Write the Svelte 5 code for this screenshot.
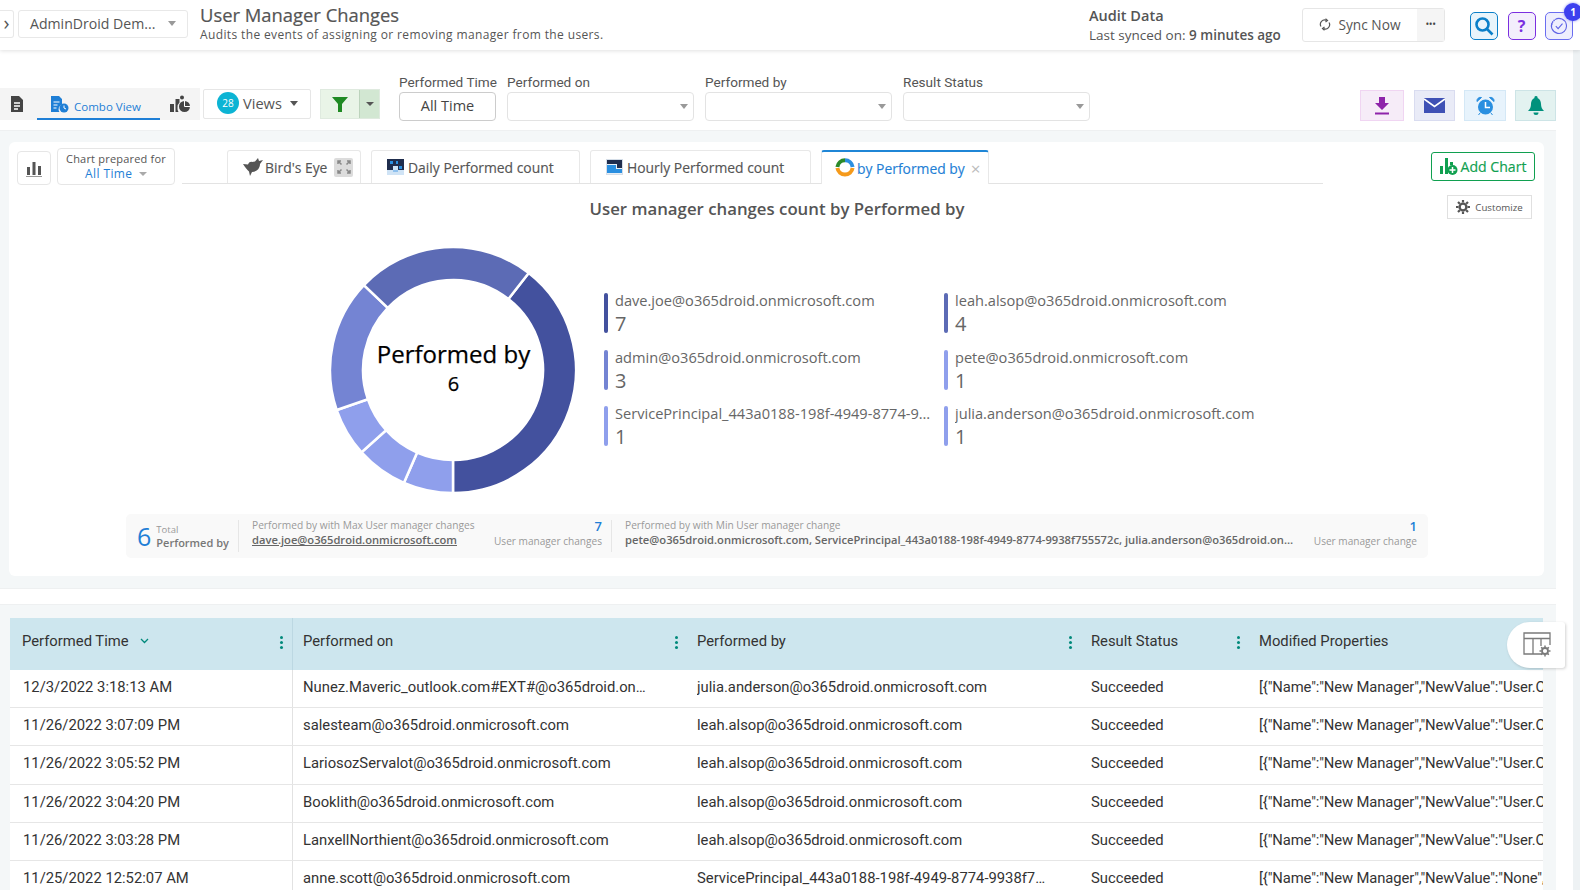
<script>
  const legend = [
    { name: "dave.joe@o365droid.onmicrosoft.com", count: 7, color: "#43519e" },
    { name: "leah.alsop@o365droid.onmicrosoft.com", count: 4, color: "#5c6bb5" },
    { name: "admin@o365droid.onmicrosoft.com", count: 3, color: "#7484d3" },
    { name: "pete@o365droid.onmicrosoft.com", count: 1, color: "#8f9fec" },
    { name: "ServicePrincipal_443a0188-198f-4949-8774-9938f755572c", count: 1, color: "#8f9fec" },
    { name: "julia.anderson@o365droid.onmicrosoft.com", count: 1, color: "#8f9fec" },
  ];

  // start/end angle of each slice, clockwise from 12 o'clock
  const slices = [
    { from: 38, to: 180, color: "#43519e" },
    { from: 180, to: 203.5, color: "#8f9fec" },
    { from: 203.5, to: 228, color: "#8f9fec" },
    { from: 228, to: 251, color: "#8f9fec" },
    { from: 251, to: 313.6, color: "#7484d3" },
    { from: 313.6, to: 398, color: "#5c6bb5" },
  ];

  const pt = (r, a) => {
    const rad = ((a - 90) * Math.PI) / 180;
    return `${(125 + r * Math.cos(rad)).toFixed(2)} ${(125 + r * Math.sin(rad)).toFixed(2)}`;
  };

  const arc = (s) => {
    const big = s.to - s.from > 180 ? 1 : 0;
    return `M${pt(123, s.from)}A123 123 0 ${big} 1 ${pt(123, s.to)}L${pt(90, s.to)}A90 90 0 ${big} 0 ${pt(90, s.from)}Z`;
  };

  const mgr = '[{"Name":"New Manager","NewValue":"User.O365droid.onmicrosoft.com"}]';
  const rows = [
    ["12/3/2022 3:18:13 AM", "Nunez.Maveric_outlook.com#EXT#@o365droid.onmicrosoft.com", "julia.anderson@o365droid.onmicrosoft.com", mgr],
    ["11/26/2022 3:07:09 PM", "salesteam@o365droid.onmicrosoft.com", "leah.alsop@o365droid.onmicrosoft.com", mgr],
    ["11/26/2022 3:05:52 PM", "LariosozServalot@o365droid.onmicrosoft.com", "leah.alsop@o365droid.onmicrosoft.com", mgr],
    ["11/26/2022 3:04:20 PM", "Booklith@o365droid.onmicrosoft.com", "leah.alsop@o365droid.onmicrosoft.com", mgr],
    ["11/26/2022 3:03:28 PM", "LanxellNorthient@o365droid.onmicrosoft.com", "leah.alsop@o365droid.onmicrosoft.com", mgr],
    ["11/25/2022 12:52:07 AM", "anne.scott@o365droid.onmicrosoft.com", "ServicePrincipal_443a0188-198f-4949-8774-9938f755572c", '[{"Name":"New Manager","NewValue":"None",']
  ];

  const filters = [
    { label: "Performed on" },
    { label: "Performed by" },
    { label: "Result Status" },
  ];
</script>

<div class="page">
  <header class="top">
    <div class="expander">›</div>
    <div class="tenant"><span>AdminDroid Dem...</span><i class="caret"></i></div>
    <div class="heading">
      <h1>User Manager Changes</h1>
      <p>Audits the events of assigning or removing manager from the users.</p>
    </div>
    <div class="audit">
      <strong>Audit Data</strong>
      <span>Last synced on: <b>9 minutes ago</b></span>
    </div>
    <div class="sync">
      <div class="sync-now">
        <svg width="12" height="13" viewBox="0 0 12 13" fill="none" stroke="#555" stroke-width="1.2"><path d="M2 8.5A4.3 4.3 0 0 1 7.5 2.4M10 4.5A4.3 4.3 0 0 1 4.5 10.6"/><path d="M6.5 0.8l2 1.7-2 1.5M5.5 12.2l-2-1.7 2-1.5"/></svg>
        Sync Now
      </div>
      <div class="sync-more">•••</div>
    </div>
    <div class="tools">
      <div class="tool search">
        <svg width="20" height="20" viewBox="0 0 20 20" fill="none" stroke="#0a7fc9" stroke-width="2.6"><circle cx="8.5" cy="8.5" r="6"/><path d="M13 13l5.5 5.5"/></svg>
      </div>
      <div class="tool help">?</div>
      <div class="tool task">
        <svg width="18" height="18" viewBox="0 0 18 18" fill="none" stroke="#5f63e6" stroke-width="1.1"><path d="M5 2.600A7.500 7.500 0 1 1 2.600 5"/><path d="M1.500 9a7.500 7.500 0 0 0 0 0M1.700 7.300L1.800 7M2.700 5L2.800 4.800M4 3.400L4.200 3.200" stroke-width="1.500" stroke-linecap="round"/><path d="M5.800 9.200l2.300 2.400 4.400-5"/></svg>
        <span class="badge">1</span>
      </div>
    </div>
  </header>

  <div class="body">
    <main class="main">
      <section class="filterbar">
        <div class="views">
          <div class="view-icon">
            <svg width="14" height="16" viewBox="0 0 14 16"><path d="M1 0h8l4 4v12H1z" fill="#444"/><path d="M4 7h6M4 10h6M4 13h4" stroke="#fff" stroke-width="1.3"/></svg>
          </div>
          <div class="view-combo">
            <svg width="19" height="18" viewBox="0 0 19 18"><path d="M1 1h8l3 3v5.500a5 5 0 0 0-2.600 7.500H1z" fill="#1f7fd6"/><path d="M3.500 7h6M3.500 10h4M3.500 13h3" stroke="#fff" stroke-width="1.200"/><circle cx="14" cy="13" r="4.500" fill="#1f7fd6"/><path d="M14 10.500V13l2 1" stroke="#fff" fill="none"/></svg>
            <span>Combo View</span>
          </div>
          <div class="view-icon">
            <svg width="21" height="18" viewBox="0 0 21 18"><path d="M0 9h4v8H0zM5.500 4h4v3.500a6 6 0 0 0-2 5.500 6 6 0 0 0 1 4h-3z" fill="#444"/><circle cx="14.500" cy="11.500" r="5.500" fill="#444"/><path d="M14.500 11.500V6M14.500 11.500H20" stroke="#fff"/><circle cx="12" cy="2.500" r="2" fill="#444"/></svg>
          </div>
        </div>
        <button class="views-btn"><span class="count">28</span>Views<i class="caret dark"></i></button>
        <div class="funnel">
          <div class="funnel-main">
            <svg width="16" height="15" viewBox="0 0 16 15"><path d="M0 0h16L10 7v8H6V7z" fill="#1f8a23"/></svg>
          </div>
          <div class="funnel-drop"><i class="caret small"></i></div>
        </div>
        <div class="field time">
          <label>Performed Time</label>
          <div class="timebox">All Time</div>
        </div>
        {#each filters as f}
          <div class="field">
            <label>{f.label}</label>
            <div class="selectbox"><i class="caret"></i></div>
          </div>
        {/each}
        <div class="actions">
          <div class="action dl">
            <svg width="16" height="18" viewBox="0 0 16 18"><path d="M5 0h6v6h4l-7 7-7-7h4z" fill="#8e24aa"/><path d="M1 16.500h14" stroke="#8e24aa" stroke-width="2"/></svg>
          </div>
          <div class="action mail">
            <svg width="21" height="15" viewBox="0 0 21 15"><path d="M0 0h21v15H0z" fill="#3f51b5"/><path d="M0 1l10.500 7.500L21 1" stroke="#fff" stroke-width="1.600" fill="none"/></svg>
          </div>
          <div class="action alarm">
            <svg width="19" height="20" viewBox="0 0 19 20"><circle cx="9.500" cy="11" r="7.500" fill="#2a8fe0"/><path d="M9.500 6v5.500H14" stroke="#fff" stroke-width="1.500" fill="none"/><path d="M1 5.500A3.500 3.500 0 0 1 5.500 1.500zM18 5.500A3.500 3.500 0 0 0 13.500 1.500zM4 17l-1.500 2M15 17l1.500 2" fill="#2a8fe0" stroke="#2a8fe0"/></svg>
          </div>
          <div class="action bell">
            <svg width="16" height="20" viewBox="0 0 16 20"><path d="M8 0a1.500 1.500 0 0 1 1.500 2C12 3 13 5.500 13 8c0 3 1 5 3 7H0c2-2 3-4 3-7 0-2.500 1-5 3.500-6A1.500 1.500 0 0 1 8 0z" fill="#00917c"/><path d="M5.500 16.500h5a2.500 2.500 0 0 1-5 0z" fill="#00917c"/></svg>
          </div>
        </div>
      </section>

      <div class="content">
        <section class="card">
          <div class="tabline">
            <div class="chart-icon">
              <svg width="16" height="17" viewBox="0 0 16 17"><path d="M1 7h3v8H1zM6.500 2h3v13h-3zM12 6h3v9h-3z" fill="#555"/><path d="M0 16.500h16" stroke="#999"/></svg>
            </div>
            <div class="prepared">
              <span>Chart prepared for</span>
              <b>All Time <i class="caret small"></i></b>
            </div>
            <div class="tabs">
              <div class="tab birds">
                <svg width="20" height="18" viewBox="0 0 20 18"><path d="M0 6l5 .5C6 4 8 3.500 9 4l3-.5L15 0l1 3 4-1-3 4c0 5-4 8-8 8l-2 4-1-4.500C4 12 2 9 0 6z" fill="#555"/></svg>
                <span>Bird's Eye</span>
                <div class="expand">
                  <svg width="14" height="14" viewBox="0 0 14 14" fill="none" stroke="#888" stroke-width="1.500"><path d="M1 4V1h3M1 1l3.500 3.500M13 4V1h-3M13 1L9.500 4.500M1 10v3h3M1 13l3.500-3.500M13 10v3h-3M13 13L9.500 9.500"/></svg>
                </div>
              </div>
              <div class="tab daily">
                <svg width="17" height="16" viewBox="0 0 17 16"><path d="M0 0h17v16H0z" fill="#cfe3f5"/><path d="M0 0h17v11h-6v-4H6v4H0z" fill="#1f2d4d"/><path d="M3 2h3v3H3zM9 2h2v3H9zM12 7h3v3h-3z" fill="#2a8fe0"/><path d="M6 11h5v2H6z" fill="#8fc1ee"/></svg>
                <span>Daily Performed count</span>
              </div>
              <div class="tab hourly">
                <svg width="17" height="16" viewBox="0 0 17 16"><path d="M0 0h17v16H0z" fill="#d5dee8"/><path d="M1 1h15v14H1z" fill="#e7eef5"/><path d="M1 1h15v8h-5V5H1z" fill="#1f2d4d"/><path d="M1 6h9v4h6v4H1z" fill="#2a8fe0"/></svg>
                <span>Hourly Performed count</span>
              </div>
              <div class="tab active">
                <svg width="20" height="20" viewBox="0 0 20 20" fill="none" stroke-width="4"><path d="M2.400 9A7.700 7.700 0 0 1 10 2.300" stroke="#2a8a2a"/><path d="M10 2.300A7.700 7.700 0 0 1 17.600 9" stroke="#2a8fe0"/><path d="M17.600 10A7.700 7.700 0 0 1 2.400 10" stroke="#f59a1b"/></svg>
                <span>by Performed by</span>
                <em>×</em>
              </div>
            </div>
            <button class="add-chart">
              <svg width="18" height="19" viewBox="0 0 18 19"><path d="M0 9h3v8H0zM5 1h3v16H5z" fill="#10a050"/><path d="M10 5h3v3h-3z" fill="#10a050"/><circle cx="12.500" cy="13" r="5" fill="#10a050"/><path d="M12.500 10v6M9.500 13h6" stroke="#fff" stroke-width="1.500"/></svg>
              Add Chart
            </button>
          </div>

          <div class="chart-head">
            <h2>User manager changes count by Performed by</h2>
            <button class="customize">
              <svg width="14" height="14" viewBox="0 0 14 14"><circle cx="7" cy="7" r="3.400" fill="none" stroke="#555" stroke-width="2.400"/><path d="M7 0v2.500M7 11.500V14M0 7h2.500M11.500 7H14M2 2l1.800 1.800M10.200 10.200L12 12M2 12l1.800-1.800M10.200 3.800L12 2" stroke="#555" stroke-width="2.200"/></svg>
              Customize
            </button>
          </div>

          <div class="chart-row">
            <div class="donut">
              <svg width="250" height="250" viewBox="0 0 250 250">
                {#each slices as s}
                  <path d={arc(s)} fill={s.color} stroke="#fff" stroke-width="2.500" />
                {/each}
              </svg>
              <div class="donut-label">
                <span>Performed by</span>
                <b>6</b>
              </div>
            </div>
            <div class="legend">
              {#each legend as l}
                <div class="legend-item">
                  <i style="background: {l.color}"></i>
                  <div class="legend-text">
                    <span>{l.name}</span>
                    <b>{l.count}</b>
                  </div>
                </div>
              {/each}
            </div>
          </div>

          <div class="summary">
            <div class="sum-total">
              <span class="big">6</span>
              <div><small>Total</small><b>Performed by</b></div>
            </div>
            <div class="sum-max">
              <div class="sum-main">
                <small>Performed by with Max User manager changes</small>
                <a href="#top" class="email">dave.joe@o365droid.onmicrosoft.com</a>
              </div>
              <div class="sum-num"><b>7</b><small>User manager changes</small></div>
            </div>
            <div class="sum-min">
              <div class="sum-main grow">
                <small>Performed by with Min User manager change</small>
                <span class="email">pete@o365droid.onmicrosoft.com, ServicePrincipal_443a0188-198f-4949-8774-9938f755572c, julia.anderson@o365droid.onmicrosoft.com</span>
              </div>
              <div class="sum-num"><b>1</b><small>User manager change</small></div>
            </div>
          </div>
        </section>

        <div class="strip"></div>

        <section class="grid-wrap">
          <div class="grid">
            <div class="row head">
              <div class="cell first">Performed Time
                <svg class="sort" width="9" height="6" viewBox="0 0 9 6" fill="none" stroke="#00897b" stroke-width="1.300"><path d="M1 1l3.500 3.500L8 1"/></svg>
                <i class="kebab"></i>
              </div>
              <div class="cell">Performed on<i class="kebab"></i></div>
              <div class="cell">Performed by<i class="kebab"></i></div>
              <div class="cell">Result Status<i class="kebab"></i></div>
              <div class="cell">Modified Properties</div>
            </div>
            {#each rows as r}
              <div class="row">
                <div class="cell first">{r[0]}</div>
                <div class="cell"><span class="clip">{r[1]}</span></div>
                <div class="cell"><span class="clip wide">{r[2]}</span></div>
                <div class="cell">Succeeded</div>
                <div class="cell tight">{r[3]}</div>
              </div>
            {/each}
          </div>
        </section>
      </div>

      <div class="grid-settings">
        <svg width="30" height="26" viewBox="0 0 30 26" fill="none" stroke="#7a7a7a" stroke-width="1.300">
          <path d="M19 22H1V1h26v12M1 6.500h26M10 6.500V22M18 6.500V14"/>
          <circle cx="22" cy="19" r="3" stroke-width="1.800"/>
          <path d="M22 13.500v2M22 22.500v2M16.500 19h2M25.500 19h2M18.200 15.200l1.400 1.400M24.400 21.400l1.400 1.400M18.200 22.800l1.400-1.400M24.400 16.600l1.400-1.400" stroke-width="1.500"/>
        </svg>
      </div>
    </main>
    <div class="scroll"></div>
  </div>
</div>

<style>
  :global(body) {
    margin: 0;
    background: #fff;
  }

  .page {
    width: 1580px;
    height: 890px;
    overflow: hidden;
    font-family: "Open Sans", sans-serif;
    color: #555;
    position: relative;
  }

  .top {
    height: 50px;
    display: flex;
    align-items: center;
    background: #fff;
    box-shadow: 0 1px 4px rgba(0, 0, 0, 0.12);
    position: relative;
    z-index: 2;
  }

  .expander {
    width: 14px;
    height: 28px;
    margin-top: -3px;
    border: 1px solid #e8e8e8;
    border-left: none;
    border-radius: 0 3px 3px 0;
    box-sizing: border-box;
    font-size: 20px;
    line-height: 23px;
    text-align: center;
    color: #555;
  }

  .tenant {
    width: 170px;
    height: 28px;
    margin: -3px 0 0 4px;
    border: 1px solid #e8e8e8;
    border-radius: 3px;
    box-sizing: border-box;
    display: flex;
    align-items: center;
    justify-content: space-between;
    padding: 0 11px 1px 11px;
    font-size: 14.100px;
    color: #555;
  }

  .caret {
    display: inline-block;
    width: 0;
    height: 0;
    border-left: 4.500px solid transparent;
    border-right: 4.500px solid transparent;
    border-top: 5.500px solid #999;
  }

  .caret.dark {
    border-top-color: #555;
    margin-left: 4px;
  }

  .caret.small {
    border-left-width: 4px;
    border-right-width: 4px;
    border-top-width: 4px;
  }

  .heading {
    margin: -5px 0 0 12px;
    width: 889px;
  }

  h1 {
    margin: 0;
    font-size: 18.400px;
    line-height: 24px;
    font-weight: 400;
    color: #555;
    -webkit-text-stroke: 0.2px #555;
  }

  .heading p {
    margin: 0;
    font-size: 12px;
    line-height: 15px;
    letter-spacing: 0.37px;
    color: #555;
  }

  .audit {
    width: 213px;
    display: flex;
    flex-direction: column;
    margin-top: 1px;
    font-size: 13.500px;
    line-height: 19px;
  }

  .audit strong {
    font-weight: 600;
    font-size: 14.500px;
  }

  .audit span {
    margin-top: 1px;
  }

  .audit b {
    font-weight: 600;
  }

  .sync {
    width: 143px;
    height: 34px;
    margin-top: -1px;
    display: flex;
    border: 1px solid #e6e6e6;
    border-radius: 3px;
    box-sizing: border-box;
  }

  .sync-now {
    width: 114px;
    display: flex;
    align-items: center;
    justify-content: center;
    gap: 7px;
    font-size: 13.700px;
  }

  .sync-more {
    flex: 1;
    background: #f5f5f5;
    font-size: 10px;
    line-height: 31px;
    text-align: center;
    color: #444;
    letter-spacing: -0.5px;
  }

  .tools {
    display: flex;
    gap: 9.500px;
    margin-left: 25px;
    margin-top: 2px;
  }

  .tool {
    width: 28px;
    height: 28px;
    box-sizing: border-box;
    border-radius: 5px;
    display: flex;
    align-items: center;
    justify-content: center;
    position: relative;
  }

  .search {
    border: 1px solid #0a7fc9;
    background: #e8f4fb;
  }

  .help {
    border: 1px solid #7b2fe0;
    background: #f3eefc;
    color: #7b2fe0;
    font-weight: 700;
    font-size: 16px;
  }

  .task {
    border: 1px solid #6a6df0;
    background: #eeeefd;
  }

  .badge {
    position: absolute;
    top: -10px;
    right: -10px;
    width: 18px;
    height: 18px;
    border-radius: 50%;
    background: #3d40ee;
    box-shadow: 0 0 3px #8a8cf5;
    color: #fff;
    font-size: 10px;
    font-weight: 700;
    line-height: 18px;
    text-align: center;
  }

  .body {
    display: flex;
    height: 840px;
  }

  .main {
    width: 1573px;
    position: relative;
  }

  .scroll {
    width: 7px;
    background: #eef2f4;
  }

  .filterbar {
    height: 80px;
    display: flex;
    align-items: flex-end;
    box-sizing: border-box;
    padding-bottom: 9px;
  }

  .views {
    width: 200px;
    height: 32px;
    background: #f4f4f4;
    display: flex;
    align-items: center;
    margin-bottom: 1px;
    box-sizing: border-box;
  }

  .view-icon {
    width: 37px;
    box-sizing: border-box;
    padding-right: 3px;
    display: flex;
    justify-content: center;
  }

  .view-icon:last-child {
    width: 40px;
    padding-right: 0;
  }

  .view-combo {
    width: 123px;
    height: 32px;
    box-sizing: border-box;
    border-bottom: 2px solid #1f7fd6;
    display: flex;
    align-items: center;
    justify-content: center;
    gap: 5px;
    color: #1f7fd6;
    font-size: 11.500px;
    padding: 2px 6px 0 0;
  }

  .view-combo span {
    margin-top: 4px;
  }

  .views-btn {
    width: 108px;
    height: 30px;
    margin: 0 0 2px 3px;
    background: #fff;
    border: 1px solid #e6e6e6;
    border-radius: 2px;
    display: flex;
    align-items: center;
    gap: 4px;
    font-family: inherit;
    font-size: 14.600px;
    color: #555;
    padding: 0 0 2px 13px;
  }

  .count {
    width: 22px;
    height: 22px;
    border-radius: 50%;
    background: #0cb4d4;
    color: #fff;
    font-size: 10px;
    line-height: 22px;
    text-align: center;
  }

  .funnel {
    width: 60px;
    height: 30px;
    margin: 0 0 2px 9px;
    display: flex;
    border: 1px solid #dfeadf;
    box-sizing: border-box;
  }

  .funnel-main {
    width: 38px;
    background: #e9f4e7;
    border-right: 1px solid #bcd3bc;
    display: flex;
    align-items: center;
    justify-content: center;
  }

  .funnel-drop {
    flex: 1;
    background: #d2e7d2;
    display: flex;
    align-items: center;
    justify-content: center;
  }

  .funnel-drop .caret {
    border-top-color: #555;
  }

  .field {
    width: 187px;
    margin-left: 11px;
    font-family: Roboto, sans-serif;
  }

  .field.time {
    width: 97px;
    margin-left: 19px;
  }

  .field label {
    display: block;
    font-size: 13.600px;
    line-height: 17px;
    margin-bottom: 0;
    color: #555;
    white-space: nowrap;
  }

  .timebox,
  .selectbox {
    height: 29px;
    margin-top: 1px;
    box-sizing: border-box;
    border: 1px solid #e3e3e3;
    border-radius: 4px;
    display: flex;
    align-items: center;
  }

  .timebox {
    justify-content: center;
    border-color: #ccc;
    font-family: "Open Sans", sans-serif;
    font-size: 14.500px;
    color: #444;
    padding-bottom: 3px;
  }

  .selectbox {
    justify-content: flex-end;
    padding-right: 5px;
  }

  .actions {
    display: flex;
    margin-left: 270px;
    gap: 9px;
  }

  .action {
    width: 44px;
    height: 31px;
    box-sizing: border-box;
    border: 1px solid;
    display: flex;
    align-items: center;
    justify-content: center;
  }

  .dl {
    background: #f6ecf8;
    border-color: #f0d5f2;
    margin-right: 1px;
  }

  .mail {
    width: 41px;
    background: #e9ebf7;
    border-color: #d9dcf0;
  }

  .alarm {
    width: 42px;
    background: #e7f3fc;
    border-color: #d4e8f6;
  }

  .bell {
    width: 41px;
    background: #e3f2f0;
    border-color: #cde4e6;
  }

  .content {
    width: 1556px;
    height: 760px;
    background: #f4f7f8;
    border-top: 1px solid #eef0f1;
    box-sizing: border-box;
    padding-top: 11px;
  }

  .card {
    margin-left: 9px;
    width: 1535px;
    height: 434px;
    background: #fff;
    border-radius: 6px;
    box-sizing: border-box;
    padding-top: 6px;
  }

  .tabline {
    display: flex;
    align-items: flex-start;
    height: 36px;
    margin-left: 8px;
  }

  .chart-icon {
    width: 34px;
    height: 34px;
    margin-top: 3px;
    box-sizing: border-box;
    border: 1px solid #e6e6e6;
    border-radius: 4px;
    display: flex;
    align-items: center;
    justify-content: center;
  }

  .prepared {
    width: 118px;
    height: 37px;
    margin-left: 6px;
    box-sizing: border-box;
    border: 1px solid #e6e6e6;
    border-radius: 4px;
    display: flex;
    flex-direction: column;
    align-items: center;
    font-size: 11px;
    line-height: 14px;
    padding-top: 3px;
    letter-spacing: 0.2px;
  }

  .prepared b {
    font-weight: 400;
    color: #1f7fd6;
    font-size: 12px;
    line-height: 15px;
    letter-spacing: 0.4px;
  }

  .prepared .caret {
    border-top-color: #aaa;
    margin-left: 3px;
    vertical-align: 2px;
  }

  .tabs {
    width: 1141px;
    height: 36px;
    margin-left: 7px;
    box-sizing: border-box;
    border-bottom: 1px solid #e3e3e3;
    display: flex;
    padding-left: 45px;
    gap: 10px;
  }

  .tab {
    height: 33px;
    margin-top: 2px;
    box-sizing: border-box;
    border: 1px solid #e8e8e8;
    border-bottom: none;
    border-radius: 3px 3px 0 0;
    display: flex;
    align-items: center;
    font-size: 13.900px;
    color: #555;
    -webkit-text-stroke: 0.15px #555;
  }

  .birds {
    width: 134px;
    padding-left: 15px;
    gap: 2px;
  }

  .expand {
    width: 19px;
    height: 19px;
    background: #dcdcdc;
    border-radius: 2px;
    margin-left: 5px;
    display: flex;
    align-items: center;
    justify-content: center;
  }

  .daily {
    width: 209px;
    padding-left: 15px;
    gap: 4px;
  }

  .hourly {
    width: 221px;
    padding-left: 15px;
    gap: 4px;
  }

  .active {
    width: 168px;
    height: 34px;
    padding-left: 13px;
    gap: 2px;
    border-top: 2px solid #1f86d6;
    background: #fff;
    color: #1f7fd6;
    -webkit-text-stroke: 0.15px #1f7fd6;
  }

  .active em {
    font-style: normal;
    font-size: 17px;
    color: #bbb;
    margin-left: 4px;
    -webkit-text-stroke: 0;
  }

  .add-chart {
    width: 104px;
    height: 29px;
    margin: 4px 0 0 108px;
    background: #fff;
    border: 1px solid #10a050;
    border-radius: 3px;
    color: #10a050;
    font-family: inherit;
    font-size: 14.100px;
    display: flex;
    align-items: center;
    justify-content: center;
    gap: 3px;
    padding: 0;
    -webkit-text-stroke: 0.15px #10a050;
  }

  .chart-head {
    display: flex;
    height: 42px;
    position: relative;
  }

  h2 {
    margin: 14px 0 0 1px;
    width: 1535px;
    text-align: center;
    font-size: 16.800px;
    line-height: 22px;
    font-weight: 600;
    color: #555;
  }

  .customize {
    position: absolute;
    top: 11px;
    left: 1438px;
    width: 85px;
    height: 24px;
    background: #fff;
    border: 1px solid #e0e0e0;
    font-family: inherit;
    font-size: 9.700px;
    color: #555;
    display: flex;
    align-items: center;
    justify-content: center;
    gap: 5px;
    padding: 0;
  }

  .chart-row {
    display: flex;
    height: 288px;
    padding-left: 319px;
    box-sizing: border-box;
  }

  .donut {
    width: 250px;
    height: 250px;
    margin-top: 19px;
    position: relative;
  }

  .donut svg {
    display: block;
  }

  .donut-label {
    position: absolute;
    inset: 0;
    display: flex;
    flex-direction: column;
    align-items: center;
    justify-content: center;
    color: #000;
    font-size: 24px;
    line-height: 32px;
    padding: 0 0 4px 1px;
    box-sizing: border-box;
    -webkit-text-stroke: 0.25px #000;
  }

  .donut-label b {
    font-weight: 400;
    font-size: 20px;
    line-height: 28px;
  }

  .legend {
    margin: 67px 0 0 25.500px;
    display: grid;
    grid-template-columns: 340px 340px;
    grid-auto-rows: 56.600px;
    height: 171px;
  }

  .legend-item {
    display: flex;
    align-items: flex-start;
    gap: 7px;
    height: 40px;
  }

  .legend-item i {
    width: 4.500px;
    height: 40px;
    border-radius: 2px;
    flex: none;
  }

  .legend-text {
    display: flex;
    flex-direction: column;
    min-width: 0;
    width: 318px;
    font-size: 14.600px;
    color: #666;
    margin-top: -4px;
  }

  .legend-text span {
    flex: none;
    line-height: 22px;
    overflow: hidden;
    white-space: nowrap;
    text-overflow: ellipsis;
  }

  .legend-text b {
    flex: none;
    font-weight: 400;
    font-size: 20px;
    line-height: 25px;
  }

  .summary {
    margin-left: 117px;
    width: 1302px;
    height: 44px;
    background: #f9f9f9;
    border-radius: 5px;
    display: flex;
    align-items: center;
    font-size: 10px;
    color: #999;
  }

  .sum-total {
    width: 113px;
    height: 32px;
    display: flex;
    align-items: center;
    box-sizing: border-box;
    padding-left: 11px;
    gap: 5px;
    border-right: 1px solid #e6e6e6;
  }

  .big {
    font-size: 25px;
    color: #1f7fd6;
    line-height: 30px;
  }

  .sum-total small,
  .sum-total b {
    display: block;
    line-height: 13px;
  }

  .sum-total small {
    font-size: 9.500px;
  }

  .sum-total b {
    font-weight: 600;
    font-size: 11px;
    color: #777;
    line-height: 13px;
  }

  .sum-max {
    width: 373px;
    height: 32px;
    display: flex;
    padding: 0 9px 0 13px;
    box-sizing: border-box;
    border-right: 1px solid #e6e6e6;
    justify-content: space-between;
  }

  .sum-min {
    flex: 1;
    min-width: 0;
    display: flex;
    padding: 0 11px 0 13px;
    gap: 16px;
    height: 32px;
  }

  .sum-main {
    display: flex;
    flex-direction: column;
    min-width: 0;
    margin-top: -2px;
  }

  .sum-main small {
    font-size: 10.200px;
    line-height: 14px;
    white-space: nowrap;
  }

  .grow {
    flex: 1;
  }

  .email {
    flex: none;
    font-weight: 600;
    font-size: 11.200px;
    line-height: 16px;
    color: #666;
    white-space: nowrap;
    overflow: hidden;
    text-overflow: ellipsis;
  }

  .sum-num {
    display: flex;
    flex-direction: column;
    align-items: flex-end;
    white-space: nowrap;
    margin-top: -3px;
  }

  .sum-num b {
    font-size: 13px;
    line-height: 18px;
    color: #1f7fd6;
    font-weight: 600;
  }

  .sum-num small {
    font-size: 10.100px;
    line-height: 13px;
  }

  .strip {
    height: 17px;
    margin: 12px 0 13px;
    background: #fff;
    border-top: 1px solid #eef0f1;
    border-bottom: 1px solid #eef0f1;
    box-sizing: border-box;
  }

  .grid-wrap {
    padding-left: 10px;
  }

  .grid {
    width: 1533px;
    overflow: hidden;
    background: #fff;
    font-family: Roboto, sans-serif;
    font-size: 14.800px;
    color: #333;
  }

  .row {
    display: grid;
    grid-template-columns: 283px 394px 394px 168px 294px;
    height: 38.200px;
    border-bottom: 1px solid #e6e6e6;
    box-sizing: border-box;
  }

  .row.head {
    height: 52px;
    background: #cde6ee;
    border-bottom: none;
  }

  .cell {
    display: flex;
    align-items: center;
    padding: 0 10px 3px;
    position: relative;
    white-space: nowrap;
    overflow: hidden;
  }

  .tight {
    letter-spacing: -0.12px;
  }

  .head .cell {
    padding-bottom: 7px;
    box-sizing: border-box;
    overflow: visible;
  }

  .first {
    padding-left: 13px;
    border-right: 1px solid #e2e2e2;
  }

  .head .first {
    padding-left: 12px;
    border-right-color: #bcd8e2;
  }

  .sort {
    margin-left: 11px;
  }

  .clip {
    max-width: 348px;
    overflow: hidden;
    text-overflow: ellipsis;
  }

  .clip.wide {
    max-width: 351px;
  }

  .kebab {
    position: absolute;
    right: 9px;
    top: 18px;
    width: 3px;
    height: 3px;
    border-radius: 50%;
    background: #00897b;
    box-shadow: 0 5px 0 #00897b, 0 10px 0 #00897b;
  }

  .grid-settings {
    position: absolute;
    left: 1507px;
    top: 572px;
    width: 58px;
    height: 46px;
    background: #fff;
    border-radius: 23px 3px 3px 23px;
    box-shadow: 1px 1px 3px rgba(0, 0, 0, 0.18);
    display: flex;
    align-items: center;
    justify-content: center;
    padding-left: 4px;
    box-sizing: border-box;
  }
</style>
